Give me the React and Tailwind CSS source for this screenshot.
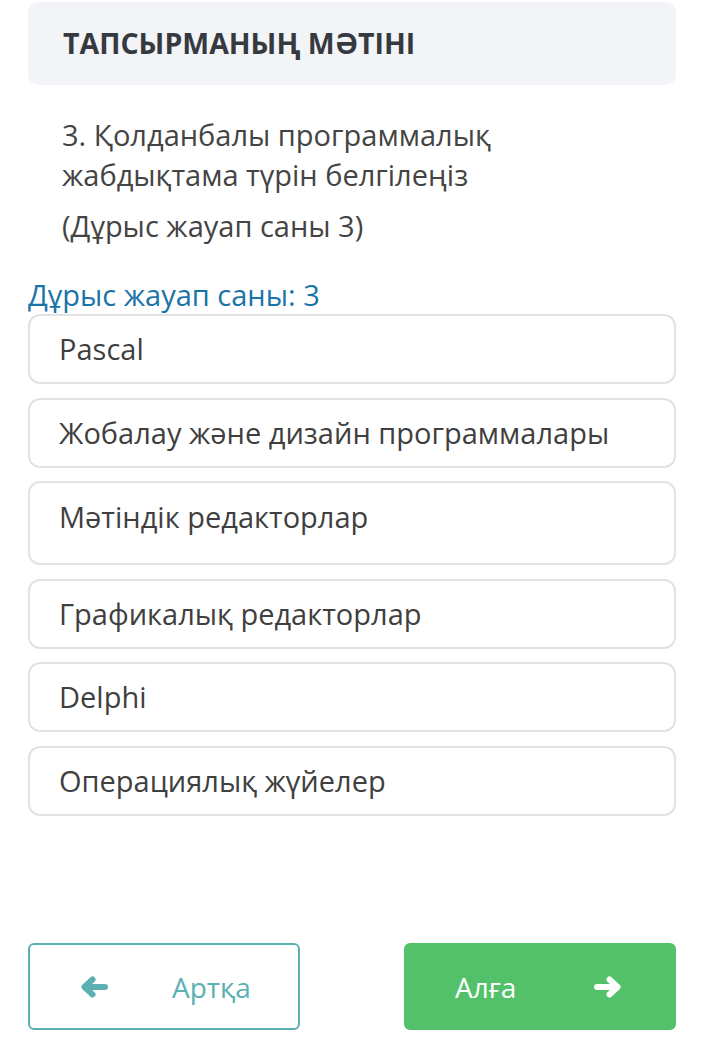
import React from 'react';

const options = [
  { text: 'Pascal', tall: false },
  { text: 'Жобалау және дизайн программалары', tall: false },
  { text: 'Мәтіндік редакторлар', tall: true },
  { text: 'Графикалық редакторлар', tall: false },
  { text: 'Delphi', tall: false },
  { text: 'Операциялық жүйелер', tall: false },
];

const ArrowLeft = ({ className }) => (
  <svg viewBox="0 0 28 24" className={className} fill="none" stroke="currentColor" strokeWidth="6" strokeLinecap="round" strokeLinejoin="round">
    <path d="M25 12H5" />
    <path d="M12.5 4.5L4.5 12L12.5 19.5" />
  </svg>
);

const ArrowRight = ({ className }) => (
  <svg viewBox="0 0 28 24" className={className} fill="none" stroke="currentColor" strokeWidth="6" strokeLinecap="round" strokeLinejoin="round">
    <path d="M3 12H23" />
    <path d="M15.5 4.5L23.5 12L15.5 19.5" />
  </svg>
);

const App = () => {
  return (
    <div className="w-[712px] h-[1053px] bg-white font-['Open_Sans',sans-serif] pl-[28px] pr-[36px] pt-[2px] flex flex-col">
      <div className="bg-[#f3f4f8] rounded-[10px] h-[83px] flex items-center pl-[35px]">
        <h2 className="text-[28.5px] font-bold text-[#363a40]">ТАПСЫРМАНЫҢ МӘТІНІ</h2>
      </div>

      <div className="pl-[34px] pt-[30px] text-[#444] text-[29px] leading-[40px]">
        <p>3. Қолданбалы программалық<br />жабдықтама түрін белгілеңіз</p>
        <p className="mt-[11px]">(Дұрыс жауап саны 3)</p>
      </div>

      <div className="mt-[32px] mb-[2px] text-[#1b74a8] text-[29px] leading-[34px]">Дұрыс жауап саны: 3</div>

      <div className="flex flex-col gap-[13.5px]">
        {options.map((o) => (
          <div
            key={o.text}
            className={`border-2 border-[#e2e2e2] rounded-[12px] px-[29px] text-[29px] text-[#3f3f3f] ${
              o.tall ? 'h-[84px] pt-[12px]' : 'h-[70px] flex items-center'
            }`}
          >
            {o.text}
          </div>
        ))}
      </div>

      <div className="mt-auto mb-[23px] flex justify-between">
        <button className="w-[272px] h-[87px] border-2 border-[#5bb0b2] rounded-[6px] flex items-center text-[#5bb0b2] text-[28px]">
          <ArrowLeft className="w-[28px] h-[24px] ml-[50px] text-[#5bb0b2]" />
          <span className="ml-[64px]">Артқа</span>
        </button>
        <button className="w-[272px] h-[87px] bg-[#52c16a] rounded-[6px] flex items-center text-white text-[28px]">
          <span className="ml-[51px]">Алға</span>
          <ArrowRight className="w-[28px] h-[24px] ml-auto mr-[54px]" />
        </button>
      </div>
    </div>
  );
};

export default App;
